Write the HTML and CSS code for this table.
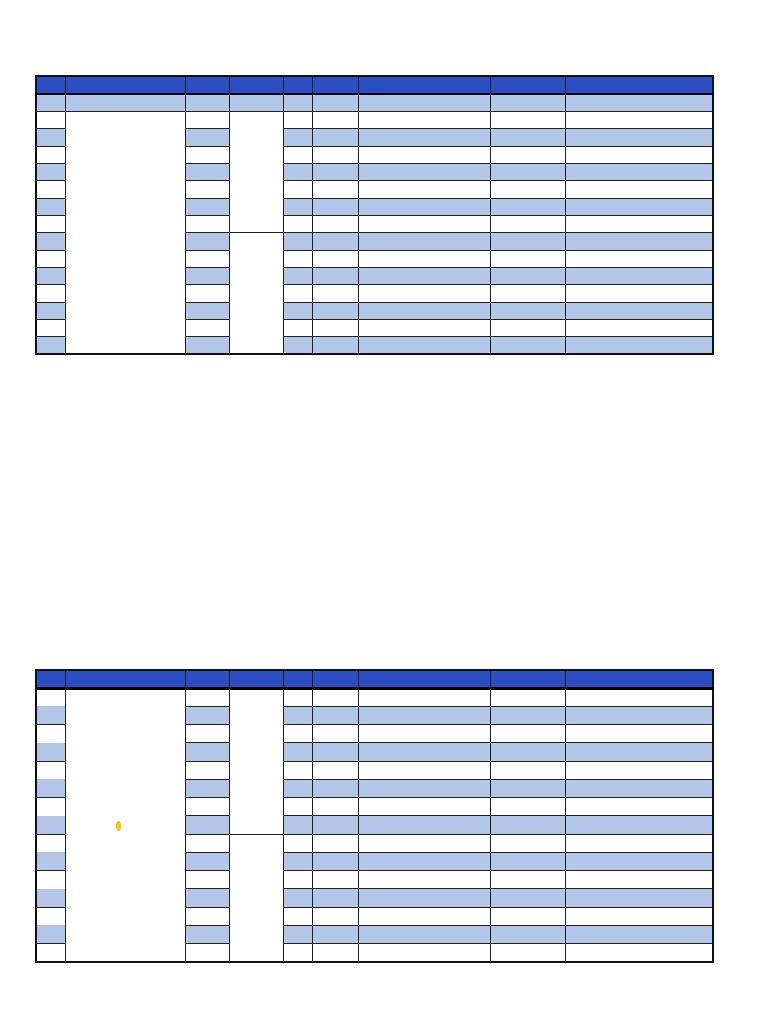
FILE: index.html
```html
<!DOCTYPE html>
<html>
<head>
<meta charset="utf-8">
<link rel="stylesheet" href="styles.css">
</head>
<body>
<div class="page">
<table class="sheet sheet-a">
<colgroup><col class="c1"><col class="c2"><col class="c3"><col class="c4"><col class="c5"><col class="c6"><col class="c7"><col class="c8"><col class="c9"></colgroup>
<tr class="hd"><td></td><td></td><td></td><td></td><td></td><td></td><td></td><td class="g"></td><td class="g"></td></tr>
<tr class="b"><td></td><td></td><td></td><td></td><td></td><td></td><td></td><td class="g"></td><td class="g"></td></tr>
<tr><td></td><td class="m" rowspan="14"></td><td></td><td class="m" rowspan="7"></td><td></td><td></td><td></td><td class="g"></td><td class="g"></td></tr>
<tr class="b"><td></td><td></td><td></td><td></td><td></td><td class="g"></td><td class="g"></td></tr>
<tr><td></td><td></td><td></td><td></td><td></td><td class="g"></td><td class="g"></td></tr>
<tr class="b"><td></td><td></td><td></td><td></td><td></td><td class="g"></td><td class="g"></td></tr>
<tr><td></td><td></td><td></td><td></td><td></td><td class="g"></td><td class="g"></td></tr>
<tr class="b"><td></td><td></td><td></td><td></td><td></td><td class="g"></td><td class="g"></td></tr>
<tr><td></td><td></td><td></td><td></td><td></td><td class="g"></td><td class="g"></td></tr>
<tr class="b"><td></td><td></td><td class="m" rowspan="7"></td><td></td><td></td><td></td><td class="g"></td><td class="g"></td></tr>
<tr><td></td><td></td><td></td><td></td><td></td><td class="g"></td><td class="g"></td></tr>
<tr class="b"><td></td><td></td><td></td><td></td><td></td><td class="g"></td><td class="g"></td></tr>
<tr><td></td><td></td><td></td><td></td><td></td><td class="g"></td><td class="g"></td></tr>
<tr class="b"><td></td><td></td><td></td><td></td><td></td><td class="g"></td><td class="g"></td></tr>
<tr><td></td><td></td><td></td><td></td><td></td><td class="g"></td><td class="g"></td></tr>
<tr class="b"><td></td><td></td><td></td><td></td><td></td><td class="g"></td><td class="g"></td></tr>
</table>

<table class="sheet sheet-b">
<colgroup><col class="c1"><col class="c2"><col class="c3"><col class="c4"><col class="c5"><col class="c6"><col class="c7"><col class="c8"><col class="c9"></colgroup>
<tr class="hd"><td></td><td></td><td></td><td></td><td></td><td></td><td></td><td class="g"></td><td class="g"></td></tr>
<tr><td></td><td class="m dotcell" rowspan="15"><span class="dot"></span></td><td></td><td class="m" rowspan="8"></td><td></td><td></td><td></td><td class="g"></td><td class="g"></td></tr>
<tr class="b"><td class="soft"></td><td></td><td></td><td></td><td></td><td class="g"></td><td class="g"></td></tr>
<tr><td></td><td></td><td></td><td></td><td></td><td class="g"></td><td class="g"></td></tr>
<tr class="b"><td class="soft"></td><td></td><td></td><td></td><td></td><td class="g"></td><td class="g"></td></tr>
<tr><td></td><td></td><td></td><td></td><td></td><td class="g"></td><td class="g"></td></tr>
<tr class="b"><td class="soft"></td><td></td><td></td><td></td><td></td><td class="g"></td><td class="g"></td></tr>
<tr><td></td><td></td><td></td><td></td><td></td><td class="g"></td><td class="g"></td></tr>
<tr class="b"><td class="soft"></td><td></td><td></td><td></td><td></td><td class="g"></td><td class="g"></td></tr>
<tr><td></td><td></td><td class="m" rowspan="7"></td><td></td><td></td><td></td><td class="g"></td><td class="g"></td></tr>
<tr class="b"><td class="soft"></td><td></td><td></td><td></td><td></td><td class="g"></td><td class="g"></td></tr>
<tr><td></td><td></td><td></td><td></td><td></td><td class="g"></td><td class="g"></td></tr>
<tr class="b"><td class="soft"></td><td></td><td></td><td></td><td></td><td class="g"></td><td class="g"></td></tr>
<tr><td></td><td></td><td></td><td></td><td></td><td class="g"></td><td class="g"></td></tr>
<tr class="b"><td class="soft"></td><td></td><td></td><td></td><td></td><td class="g"></td><td class="g"></td></tr>
<tr><td></td><td></td><td></td><td></td><td></td><td class="g"></td><td class="g"></td></tr>
</table>
</div>
</body>
</html>
```

FILE: styles.css
```css
html, body {
  margin: 0;
  background: #ffffff;
  font-family: "Liberation Sans", Arial, sans-serif;
}

.page {
  padding: 75px 0 0 35px;
}

.sheet {
  border-collapse: collapse;
  table-layout: fixed;
  width: 678px;
  border: 2px solid #111111;
}

.sheet-b {
  margin-top: 314px;
}

.c1 { width: 29px; }
.c2 { width: 120px; }
.c3 { width: 44px; }
.c4 { width: 54px; }
.c5 { width: 29px; }
.c6 { width: 46px; }
.c7 { width: 132px; }
.c8 { width: 75px; }
.c9 { width: 148px; }

.sheet td {
  border: 1px solid #1e1e1e;
  padding: 0;
  background: #ffffff;
}

.sheet td.g {
  border-left-color: #5a5a5a;
}

.sheet-a tr { height: 17.35px; }
.sheet-b tr { height: 18.25px; }

.sheet .hd td {
  background: #2b4fc3;
  border-bottom: 2px solid #000000;
}

.sheet-a .hd { height: 18px; }
.sheet-b .hd { height: 18px; }
.sheet-b .hd td { border-bottom-width: 3px; }

.sheet tr.b td {
  background: #b4c6e7;
}

.sheet tr.b td.soft {
  border-top-style: hidden;
}

.sheet tr td.m,
.sheet tr.b td.m {
  background: #ffffff;
}

.dotcell {
  text-align: center;
  vertical-align: middle;
}

.dot {
  display: inline-block;
  width: 5px;
  height: 10px;
  border-radius: 50%;
  background: #f7c600;
  margin-right: 14px;
  vertical-align: middle;
}
```
